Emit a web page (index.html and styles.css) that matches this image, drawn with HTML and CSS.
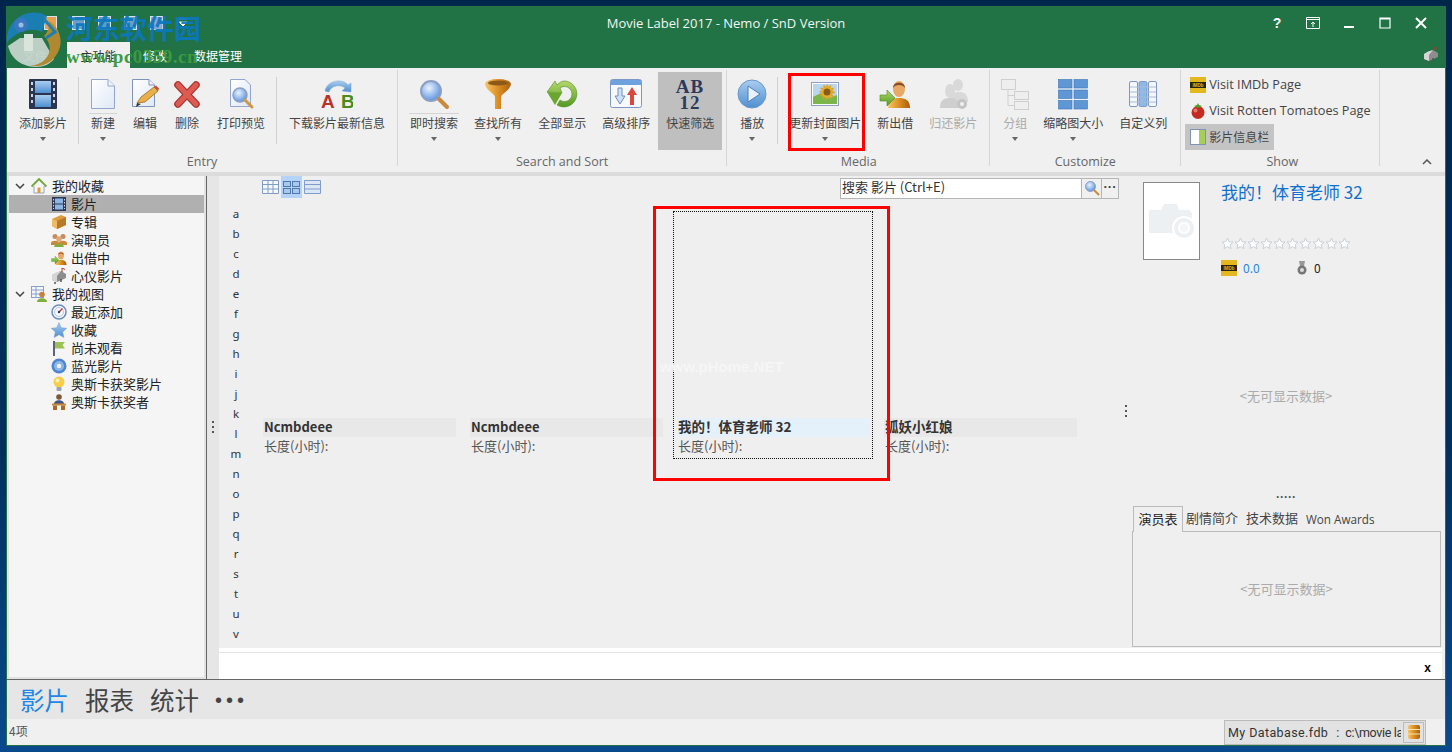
FILE: index.html
```html
<!DOCTYPE html>
<html lang="zh-CN">
<head>
  <meta charset="UTF-8" />
  <title>Movie Label 2017</title>
  <link rel="stylesheet" href="styles.css">
</head>
<body>
  <svg class="defs" width="0" height="0">
    <defs>
      <linearGradient id="gPaper" x1="0" y1="0" x2="1" y2="1"><stop offset="0" stop-color="#fff"/><stop offset="1" stop-color="#dfe8f6"/></linearGradient>
      <linearGradient id="gBlue" x1="0" y1="0" x2="0" y2="1"><stop offset="0" stop-color="#a9cdf0"/><stop offset="1" stop-color="#4f8fd0"/></linearGradient>
      <linearGradient id="gGold" x1="0" y1="0" x2="1" y2="0"><stop offset="0" stop-color="#f6c66a"/><stop offset=".55" stop-color="#d98a1e"/><stop offset="1" stop-color="#a85f10"/></linearGradient>
      <linearGradient id="gGreen" x1="0" y1="0" x2="0" y2="1"><stop offset="0" stop-color="#b5d96a"/><stop offset="1" stop-color="#4f9a23"/></linearGradient>
      <radialGradient id="gLens" cx=".4" cy=".35" r=".8"><stop offset="0" stop-color="#e8f3ff"/><stop offset="1" stop-color="#3f7fd8"/></radialGradient>

      <symbol id="i-film" viewBox="0 0 32 32"><rect x="2" y="1" width="28" height="30" rx="1" fill="#2b3550"/><rect x="8" y="3" width="16" height="12" fill="url(#gBlue)"/><rect x="8" y="17" width="16" height="12" fill="url(#gBlue)"/><g fill="#cdd6e6"><rect x="4" y="4" width="2" height="3"/><rect x="4" y="10" width="2" height="3"/><rect x="4" y="16" width="2" height="3"/><rect x="4" y="22" width="2" height="3"/><rect x="26" y="4" width="2" height="3"/><rect x="26" y="10" width="2" height="3"/><rect x="26" y="16" width="2" height="3"/><rect x="26" y="22" width="2" height="3"/></g></symbol>
      <symbol id="i-doc" viewBox="0 0 32 32"><path d="M4.500 1.500H21L27.500 8V30.500H4.500Z" fill="url(#gPaper)" stroke="#93a6cc"/><path d="M21 1.500V8H27.500" fill="#eef3fb" stroke="#93a6cc"/></symbol>
      <symbol id="i-edit" viewBox="0 0 32 32"><path d="M3.500 1.500H20L25.500 7V28.500H3.500Z" fill="url(#gPaper)" stroke="#7f93bd"/><path d="M20 1.500V7H25.500" fill="#eef3fb" stroke="#7f93bd"/><path d="M8 25L12 19 25 9 29 13 16 24Z" fill="#e9b04a" stroke="#9a6a20" stroke-width=".8"/><path d="M25 9L27 7.500 30 10.500 29 13Z" fill="#cf4c3a"/><path d="M7 29L8 25 12 26Z" fill="#333"/></symbol>
      <symbol id="i-del" viewBox="0 0 32 32"><path d="M7 7L25 26M25 7L7 26" stroke="#a8352f" stroke-width="7.500" stroke-linecap="round"/><path d="M7 7L25 26M25 7L7 26" stroke="#de5b52" stroke-width="5" stroke-linecap="round"/></symbol>
      <symbol id="i-preview" viewBox="0 0 32 32"><path d="M5.500 1.500H20L25.500 7V28.500H5.500Z" fill="url(#gPaper)" stroke="#93a6cc"/><circle cx="15" cy="17" r="7" fill="url(#gLens)" stroke="#8d9fc4" stroke-width="1.500"/><path d="M20 22L27 29" stroke="#d0964a" stroke-width="3" stroke-linecap="round"/></symbol>
      <symbol id="i-ab" viewBox="0 0 32 32"><path d="M4 13C6 2 22 0 27 7L30 5 30 14 21 13 24 10C20 6 10 7 8 14Z" fill="url(#gBlue)" stroke="#7ba5d2" stroke-width=".5"/><text x="0" y="30" class="ab-a">A</text><text x="20" y="30" class="ab-b">B</text></symbol>
      <symbol id="i-search" viewBox="0 0 32 32"><circle cx="13" cy="13" r="10" fill="url(#gLens)" stroke="#8d9fc4" stroke-width="2"/><path d="M21 21L29 29" stroke="#c98a3c" stroke-width="4" stroke-linecap="round"/></symbol>
      <symbol id="i-funnel" viewBox="0 0 32 32"><ellipse cx="16" cy="6" rx="13" ry="5" fill="url(#gGold)"/><ellipse cx="16" cy="5" rx="10" ry="2.500" fill="#8c5a18"/><path d="M3 7C6 14 12 15 13 19V31H19V19C20 15 26 14 29 7 24 11 8 11 3 7Z" fill="url(#gGold)"/></symbol>
      <symbol id="i-refresh" viewBox="0 0 32 32"><path d="M17 3A13 13 0 1 1 11 27L14 22A7.500 7.500 0 1 0 14 10L16 15 1 14 9 3 11 7A13 13 0 0 1 17 3Z" fill="url(#gGreen)" stroke="#5a8c2a" stroke-width=".6"/><path d="M1 14L16 15 9 27Z" fill="#6aa52f"/></symbol>
      <symbol id="i-sort" viewBox="0 0 32 32"><rect x=".500" y="1.500" width="31" height="28" rx="2" fill="#f7f9fd" stroke="#7f97c4"/><rect x="1" y="2" width="30" height="5" fill="#6ea2de"/><path d="M8 10H12V18H15L10 26 5 18H8Z" fill="#cfe0f5" stroke="#6e8fc0"/><path d="M20 27H24V17H27L22 9 17 17H20Z" fill="#d9483d"/></symbol>
      <symbol id="i-abnum" viewBox="0 0 32 32"><text x="16" y="15" class="num-t">AB</text><text x="16" y="31" class="num-t">12</text></symbol>
      <symbol id="i-play" viewBox="0 0 32 32"><circle cx="16" cy="16" r="14" fill="url(#gBlue)" stroke="#6d97c7"/><path d="M12 8L24 16 12 24Z" fill="#e8f2fc" stroke="#4f7fb8"/></symbol>
      <symbol id="i-photo" viewBox="0 0 32 32"><rect x="2.500" y="4.500" width="27" height="23" fill="#fff" stroke="#8fa0c4"/><rect x="4" y="6" width="24" height="20" fill="#b9d6ee"/><path d="M4 26V19L12 15 20 20 28 17V26Z" fill="#7cb64a"/><circle cx="18" cy="14" r="6" fill="#e8b030" stroke="#e2a020" stroke-width="3" stroke-dasharray="1.500 1.500"/><circle cx="18" cy="14" r="3.500" fill="#8a5a1a"/></symbol>
      <symbol id="i-lend" viewBox="0 0 32 32"><path d="M9 30C9 22 14 20 20 20S31 22 31 30Z" fill="url(#gGold)"/><ellipse cx="20" cy="11" rx="6" ry="8" fill="#e8a868"/><path d="M14 10C14 3 26 3 26 10 24 6 16 6 14 10Z" fill="#8a4a22"/><path d="M1 17H8V12L16 20 8 28V23H1Z" fill="url(#gGreen)" stroke="#4f8a22" stroke-width=".6"/></symbol>
      <symbol id="i-return" viewBox="0 0 32 32"><g fill="#d9d9d9"><ellipse cx="21" cy="7" rx="5" ry="6"/><path d="M13 24C13 16 17 14 22 14S31 16 31 24Z"/><ellipse cx="13" cy="13" rx="5" ry="7"/><path d="M3 30C3 22 7 20 13 20S22 22 22 30Z" fill="#cfcfcf"/></g><circle cx="25" cy="26" r="5" fill="#c4c4c4"/><circle cx="25" cy="26" r="2" fill="#f0f0f0"/></symbol>
      <symbol id="i-tree" viewBox="0 0 32 32"><g fill="#eee" stroke="#cfcfcf"><rect x="2.500" y="1.500" width="14" height="10"/><rect x="15.500" y="13.500" width="14" height="8"/><rect x="15.500" y="23.500" width="14" height="8"/></g><path d="M9 12V27.500H15M9 17.500H15" fill="none" stroke="#cfcfcf"/></symbol>
      <symbol id="i-grid" viewBox="0 0 32 32"><rect x="1" y="1" width="30" height="30" fill="#e8f0fa"/><g fill="#5f97d4" stroke="#3f74b4" stroke-width=".6"><rect x="1.500" y="1.500" width="13.500" height="8.500"/><rect x="17" y="1.500" width="13.500" height="8.500"/><rect x="1.500" y="12" width="13.500" height="8.500"/><rect x="17" y="12" width="13.500" height="8.500"/><rect x="1.500" y="22.500" width="13.500" height="8.500"/><rect x="17" y="22.500" width="13.500" height="8.500"/></g></symbol>
      <symbol id="i-cols" viewBox="0 0 32 32"><g stroke="#7f97c4"><rect x="2.500" y="3.500" width="8" height="25" rx="1.500" fill="#f4f7fc"/><rect x="12" y="3.500" width="8" height="25" rx="1.500" fill="#8eb8e6"/><rect x="21.500" y="3.500" width="8" height="25" rx="1.500" fill="#f4f7fc"/></g><path d="M3 9H29M3 14H29M3 19H29M3 24H29" stroke="#a9bbd9"/></symbol>
      <symbol id="i-imdb" viewBox="0 0 16 16"><rect width="16" height="16" fill="#e3b81f"/><rect x="0" y="5" width="16" height="6" fill="#2a2412"/><text x="8" y="10.300" class="imdb-t">IMDb</text></symbol>
      <symbol id="i-tomato" viewBox="0 0 16 16"><circle cx="8" cy="9.500" r="6.500" fill="#c22a22"/><circle cx="5.500" cy="7.500" r="2" fill="#e67a6a"/><path d="M4 3L8 5 12 3 9 2 8 0 7 2Z" fill="#4f9a23"/></symbol>
      <symbol id="i-panel" viewBox="0 0 16 16"><rect x=".500" y=".500" width="15" height="15" fill="#fff" stroke="#8292b4"/><rect x="9" y="1" width="6" height="14" fill="#a6cf5a"/></symbol>
      <symbol id="i-home" viewBox="0 0 16 16"><path d="M3 8V15H13V8" fill="#fbfaf2" stroke="#8fa3c8"/><rect x="6.500" y="9.500" width="3" height="5.500" fill="#e39a3a"/><path d="M.500 8.500L8 1 15.500 8.500" fill="none" stroke="#6ea63a" stroke-width="1.800"/></symbol>
      <symbol id="i-strip" viewBox="0 0 16 16"><rect x="1" y="1" width="14" height="14" fill="#2f3a55"/><rect x="4" y="2.500" width="8" height="5" fill="#8db6e2"/><rect x="4" y="8.500" width="8" height="5" fill="#8db6e2"/><path d="M2.500 3V13M13.500 3V13" stroke="#cdd6e6" stroke-dasharray="1.500 1.500"/></symbol>
      <symbol id="i-box" viewBox="0 0 16 16"><path d="M1 5L10 1 15 3V11L6 15 1 12Z" fill="#dc9c42"/><path d="M6 7L15 3V11L6 15Z" fill="#b97a26"/><path d="M1 5L6 7V15L1 12Z" fill="#eebb68"/></symbol>
      <symbol id="i-people" viewBox="0 0 16 16"><g fill="#c98a5a"><circle cx="4" cy="4.500" r="2.500"/><circle cx="12" cy="4.500" r="2.500"/></g><path d="M0 11C0 8 8 8 8 11V13H0ZM8 11C8 8 16 8 16 11V13H8Z" fill="#c98a3a"/><circle cx="8" cy="7" r="2.800" fill="#e0a878"/><path d="M3 15C3 10.500 13 10.500 13 15Z" fill="#7fae3a"/></symbol>
      <symbol id="i-mail" viewBox="0 0 16 16"><path d="M1 7L10 3 15 6V10L6 14 1 12Z" fill="#8d8d8d"/><path d="M1 7L5 4.500 10 3 6 8V14L1 12Z" fill="#d5d5d5"/><path d="M4 14V16M10 11V14" stroke="#555" stroke-width="1.500"/><path d="M11 4V0L14 1.500" fill="none" stroke="#b3362c"/></symbol>
      <symbol id="i-view" viewBox="0 0 16 16"><rect x=".500" y=".500" width="12" height="11" fill="#f3f6fb" stroke="#8ba0c8"/><path d="M.500 4H12.500M.500 8H12.500M5 1V11" stroke="#8ba0c8"/><circle cx="11" cy="8.500" r="2.800" fill="#c9803f"/><path d="M6 16C6 11 16 11 16 16Z" fill="#7fae3a"/></symbol>
      <symbol id="i-gauge" viewBox="0 0 16 16"><circle cx="8" cy="8" r="7" fill="#f4f7fc" stroke="#6c8cc4" stroke-width="1.500"/><circle cx="8" cy="8" r="4.500" fill="none" stroke="#b9c8e2"/><path d="M8 8L11.500 4.500" stroke="#c2362c" stroke-width="1.300"/><circle cx="8" cy="8" r="1.200" fill="#2d3a5c"/></symbol>
      <symbol id="i-star" viewBox="0 0 16 16"><path d="M8 .500L10.300 5.700 15.800 6.300 11.700 10 12.900 15.500 8 12.700 3.100 15.500 4.300 10 .200 6.300 5.700 5.700Z" fill="url(#gBlue)" stroke="#7b9fcb" stroke-width=".5"/></symbol>
      <symbol id="i-flag" viewBox="0 0 16 16"><path d="M3 1V16" stroke="#33405c" stroke-width="1.600"/><path d="M4 2H14L11.500 5 14 8.500H4Z" fill="#9cc254"/></symbol>
      <symbol id="i-disc" viewBox="0 0 16 16"><circle cx="8" cy="8" r="7.500" fill="#4f86cf"/><circle cx="8" cy="8" r="5" fill="#8db6e8"/><circle cx="8" cy="8" r="2.200" fill="#f0f5fb"/></symbol>
      <symbol id="i-bulb" viewBox="0 0 16 16"><circle cx="8" cy="6" r="5.500" fill="#f6ce4a"/><circle cx="6.500" cy="4.500" r="2" fill="#fdf0b0"/><rect x="5.500" y="11" width="5" height="4" rx="1" fill="#9aa4b8"/></symbol>
      <symbol id="i-desk" viewBox="0 0 16 16"><circle cx="8" cy="3" r="2.800" fill="#7a5a3a"/><path d="M3 10C3 5 13 5 13 10Z" fill="#3f5580"/><rect x="1" y="9.500" width="14" height="2" fill="#c98a3a"/><rect x="2" y="11.500" width="4" height="4.500" fill="#a86a22"/><rect x="10" y="11.500" width="4" height="4.500" fill="#a86a22"/></symbol>
      <symbol id="i-db" viewBox="0 0 16 16"><rect x="2" y="1" width="12" height="14" rx="2" fill="url(#gGold)"/><path d="M2 5.500H14M2 10H14" stroke="#fde2a8" stroke-width="1.200"/></symbol>
    </defs>
  </svg>

  <div class="window">
    <div class="titlebar">
      <div class="title-row">
        <div class="quick">
          <span class="qa qa-a"></span><span class="qa qa-b"></span><span class="qa qa-c"></span><span class="qa qa-d"></span><span class="qa qa-e"></span>
          <svg class="qa-more" width="10" height="10" viewBox="0 0 10 10"><path d="M1 1H9M1 4H9L5 8Z" fill="#fff" stroke="#fff"/></svg>
        </div>
        <div class="app-title">Movie Label 2017 - Nemo / SnD Version</div>
        <div class="win-btns">
          <span class="win-btn help">?</span>
          <span class="win-btn"><svg width="14" height="12" viewBox="0 0 14 12"><path d="M.500.500H13.500V11.500H.500ZM.500 2.500H13.500M7 10V5M5 7L7 5 9 7" fill="none" stroke="#fff"/></svg></span>
          <span class="win-btn"><svg width="12" height="12" viewBox="0 0 12 12"><path d="M1 10H11" stroke="#fff" stroke-width="2"/></svg></span>
          <span class="win-btn"><svg width="12" height="12" viewBox="0 0 12 12"><path d="M1 1H11V11H1ZM1 2H11" fill="none" stroke="#fff" stroke-width="1.200"/></svg></span>
          <span class="win-btn"><svg width="12" height="12" viewBox="0 0 12 12"><path d="M1 1L11 11M11 1L1 11" stroke="#fff" stroke-width="2"/></svg></span>
        </div>
      </div>
      <div class="tab-row">
        <span class="rtab rtab-file">文件</span>
        <span class="rtab rtab-main active">主功能</span>
        <span class="rtab rtab-edit">修改</span>
        <span class="rtab rtab-data">数据管理</span>
        <svg class="tab-mail" width="16" height="16"><use href="#i-mail"/></svg>
      </div>
    </div>

    <div class="ribbon">
      <div class="rgroup g-entry">
        <div class="rbtns">
          <div class="rbtn"><svg class="ico"><use href="#i-film"/></svg><span>添加影片</span><i class="caret"></i></div>
          <b class="rsep"></b>
          <div class="rbtn split"><svg class="ico"><use href="#i-doc"/></svg><span>新建</span><i class="caret"></i></div>
          <div class="rbtn"><svg class="ico"><use href="#i-edit"/></svg><span>编辑</span></div>
          <div class="rbtn"><svg class="ico"><use href="#i-del"/></svg><span>删除</span></div>
          <div class="rbtn"><svg class="ico"><use href="#i-preview"/></svg><span>打印预览</span></div>
          <b class="rsep"></b>
          <div class="rbtn"><svg class="ico"><use href="#i-ab"/></svg><span>下载影片最新信息</span></div>
        </div>
        <div class="rlabel">Entry</div>
      </div>
      <b class="gsep"></b>
      <div class="rgroup g-search">
        <div class="rbtns">
          <div class="rbtn split"><svg class="ico"><use href="#i-search"/></svg><span>即时搜索</span><i class="caret"></i></div>
          <div class="rbtn"><svg class="ico"><use href="#i-funnel"/></svg><span>查找所有</span><i class="caret"></i></div>
          <div class="rbtn"><svg class="ico"><use href="#i-refresh"/></svg><span>全部显示</span></div>
          <div class="rbtn"><svg class="ico"><use href="#i-sort"/></svg><span>高级排序</span></div>
          <div class="rbtn on"><svg class="ico"><use href="#i-abnum"/></svg><span>快速筛选</span></div>
        </div>
        <div class="rlabel">Search and Sort</div>
      </div>
      <b class="gsep"></b>
      <div class="rgroup g-media">
        <div class="rbtns">
          <div class="rbtn"><svg class="ico"><use href="#i-play"/></svg><span>播放</span><i class="caret"></i></div>
          <b class="rsep"></b>
          <div class="rbtn"><svg class="ico"><use href="#i-photo"/></svg><span>更新封面图片</span><i class="caret"></i></div>
          <div class="rbtn"><svg class="ico"><use href="#i-lend"/></svg><span>新出借</span></div>
          <div class="rbtn off"><svg class="ico"><use href="#i-return"/></svg><span>归还影片</span></div>
        </div>
        <div class="rlabel">Media</div>
      </div>
      <b class="gsep"></b>
      <div class="rgroup g-custom">
        <div class="rbtns">
          <div class="rbtn off"><svg class="ico"><use href="#i-tree"/></svg><span>分组</span><i class="caret"></i></div>
          <div class="rbtn"><svg class="ico"><use href="#i-grid"/></svg><span>缩略图大小</span><i class="caret"></i></div>
          <div class="rbtn"><svg class="ico"><use href="#i-cols"/></svg><span>自定义列</span></div>
        </div>
        <div class="rlabel">Customize</div>
      </div>
      <b class="gsep"></b>
      <div class="rgroup g-show">
        <div class="rrows">
          <div class="rrow"><svg class="ico16"><use href="#i-imdb"/></svg>Visit IMDb Page</div>
          <div class="rrow"><svg class="ico16"><use href="#i-tomato"/></svg>Visit Rotten Tomatoes Page</div>
          <div class="rrow on"><svg class="ico16"><use href="#i-panel"/></svg>影片信息栏</div>
        </div>
        <div class="rlabel">Show</div>
      </div>
      <b class="gsep"></b>
      <div class="rend">
        <svg width="10" height="6" viewBox="0 0 10 6"><path d="M1 5L5 1 9 5" fill="none" stroke="#555" stroke-width="1.500"/></svg>
      </div>
    </div>

    <div class="main">
      <div class="side">
        <div class="tree-row top"><svg class="chev" width="10" height="6" viewBox="0 0 10 6"><path d="M1 1L5 5 9 1" fill="none" stroke="#444" stroke-width="1.500"/></svg><svg class="ico16"><use href="#i-home"/></svg>我的收藏</div>
        <div class="tree-row sel"><svg class="ico16"><use href="#i-strip"/></svg>影片</div>
        <div class="tree-row"><svg class="ico16"><use href="#i-box"/></svg>专辑</div>
        <div class="tree-row"><svg class="ico16"><use href="#i-people"/></svg>演职员</div>
        <div class="tree-row"><svg class="ico16"><use href="#i-lend"/></svg>出借中</div>
        <div class="tree-row"><svg class="ico16"><use href="#i-mail"/></svg>心仪影片</div>
        <div class="tree-row top"><svg class="chev" width="10" height="6" viewBox="0 0 10 6"><path d="M1 1L5 5 9 1" fill="none" stroke="#444" stroke-width="1.500"/></svg><svg class="ico16"><use href="#i-view"/></svg>我的视图</div>
        <div class="tree-row"><svg class="ico16"><use href="#i-gauge"/></svg>最近添加</div>
        <div class="tree-row"><svg class="ico16"><use href="#i-star"/></svg>收藏</div>
        <div class="tree-row"><svg class="ico16"><use href="#i-flag"/></svg>尚未观看</div>
        <div class="tree-row"><svg class="ico16"><use href="#i-disc"/></svg>蓝光影片</div>
        <div class="tree-row"><svg class="ico16"><use href="#i-bulb"/></svg>奥斯卡获奖影片</div>
        <div class="tree-row"><svg class="ico16"><use href="#i-desk"/></svg>奥斯卡获奖者</div>
      </div>
      <div class="split-v"><span class="vdots"></span></div>
      <div class="work">
        <div class="work-top">
          <div class="center">
            <div class="view-bar">
              <span class="vbtn"><svg width="17" height="14" viewBox="0 0 17 14"><path d="M.500.500H16.500V13.500H.500ZM.500 4.500H16.500M.500 9H16.500M6 .500V13.500M11 .500V13.500" fill="#f6f9fd" stroke="#7f9ccb"/></svg></span>
              <span class="vbtn on"><svg width="17" height="14" viewBox="0 0 17 14"><g fill="#a8c8ec" stroke="#4f78ad"><rect x=".500" y="1.500" width="7" height="5"/><rect x="9.500" y="1.500" width="7" height="5"/><rect x=".500" y="8.500" width="7" height="5"/><rect x="9.500" y="8.500" width="7" height="5"/></g></svg></span>
              <span class="vbtn"><svg width="17" height="14" viewBox="0 0 17 14"><path d="M.500.500H16.500V13.500H.500ZM.500 4.500H16.500M.500 9H16.500" fill="#dbe6f4" stroke="#7f9ccb"/></svg></span>
              <div class="searchbox">
                <span class="search-text">搜索 影片 (Ctrl+E)</span>
                <span class="search-go"><svg width="16" height="16"><use href="#i-search"/></svg></span>
                <span class="search-more">···</span>
              </div>
            </div>
            <div class="browse">
              <div class="alpha">
                <span>a</span><span>b</span><span>c</span><span>d</span><span>e</span><span>f</span><span>g</span><span>h</span><span>i</span><span>j</span><span>k</span>
                <span>l</span><span>m</span><span>n</span><span>o</span><span>p</span><span>q</span><span>r</span><span>s</span><span>t</span><span>u</span><span>v</span>
              </div>
              <div class="cards">
                <div class="card"><div class="card-title latin">Ncmbdeee</div><div class="card-sub">长度(小时):</div></div>
                <div class="card"><div class="card-title latin">Ncmbdeee</div><div class="card-sub">长度(小时):</div></div>
                <div class="card cur"><div class="card-title">我的<span class="fw">！</span>体育老师 32</div><div class="card-sub">长度(小时):</div></div>
                <div class="card"><div class="card-title">狐妖小红娘</div><div class="card-sub">长度(小时):</div></div>
              </div>
            </div>
          </div>
          <div class="split-r"><span class="vdots"></span></div>
          <div class="detail">
            <div class="detail-head">
              <div class="poster">
                <svg width="50" height="40" viewBox="0 0 50 40"><path d="M0 10 2 9H12L15 3H28L30 9H38C42 9 43 11 43 14V32H0Z" fill="#edf0f2"/><circle cx="35" cy="27" r="12" fill="#fff"/><circle cx="35" cy="27" r="10" fill="#edf0f2"/><circle cx="35" cy="27" r="6" fill="#fff"/><circle cx="35" cy="27" r="4" fill="#f4f6f7"/></svg>
              </div>
              <div class="detail-info">
                <div class="detail-title">我的<span class="fw">！</span>体育老师 32</div>
                <svg class="stars" width="130" height="13" viewBox="0 0 130 13">
                  <defs><pattern id="pStar" width="13" height="13" patternUnits="userSpaceOnUse"><path d="M6.500 1L8.100 4.700 12 5.100 9.100 7.700 10 11.600 6.500 9.600 3 11.600 3.900 7.700 1 5.100 4.900 4.700Z" fill="#fff" stroke="#c3cbd6" stroke-width=".9"/></pattern></defs>
                  <rect width="130" height="13" fill="url(#pStar)"/>
                </svg>
                <div class="detail-meta">
                  <svg class="ico16"><use href="#i-imdb"/></svg><span class="imdb-val">0.0</span>
                  <span class="medal"><svg width="12" height="14" viewBox="0 0 12 14"><path d="M3 0H9L8 5H4Z" fill="#999"/><circle cx="6" cy="9" r="4.500" fill="#777"/><circle cx="6" cy="9" r="2" fill="#ddd"/></svg></span><span class="medal-val">0</span>
                </div>
              </div>
            </div>
            <div class="no-data upper">&lt;无可显示数据&gt;</div>
            <div class="hdots">·····</div>
            <div class="dtabs">
              <span class="dtab on">演员表</span>
              <span class="dtab">剧情简介</span>
              <span class="dtab">技术数据</span>
              <span class="dtab latin">Won Awards</span>
            </div>
            <div class="dbox"><div class="no-data">&lt;无可显示数据&gt;</div></div>
          </div>
        </div>
        <div class="filter-bar"><span class="filter-x">x</span></div>
      </div>
    </div>

    <div class="navbar">
      <span class="nav-item cur">影片</span>
      <span class="nav-item">报表</span>
      <span class="nav-item">统计</span>
      <span class="nav-more">•••</span>
    </div>
    <div class="statusbar">
      <span class="count">4项</span>
      <div class="dbinfo">
        <span class="dbname"><span class="db-file">My Database.fdb</span><span class="db-colon">:</span><span class="db-path">c:\movie labe</span></span>
        <span class="dbicon"><svg width="16" height="16"><use href="#i-db"/></svg></span>
      </div>
    </div>

    <!-- 截图上的标注和水印 -->
    <div class="mark mark-btn"></div>
    <div class="mark mark-card"></div>
    <div class="wm-logo">
      <svg width="58" height="56" viewBox="0 0 58 56">
        <path d="M2 34C6 50 20 55 30 55 38 55 44 52 48 47L36 26 14 26Z" fill="#c4d4cc"/>
        <path d="M1 31A27 27 0 0 1 41 4L36 20C24 14 8 21 1 31Z" fill="#1a7fb8"/>
        <path d="M38 24C42 20 44 14 43 9 56 17 60 36 45 49 38 54 30 55 24 54 42 52 50 36 38 24Z" fill="#b78a2e"/>
        <rect x="18" y="22" width="9" height="17" fill="#e3ece4"/>
        <circle cx="15" cy="13" r="7" fill="#3c78c8"/><circle cx="15" cy="13" r="2.500" fill="#9cc4e8"/>
        <path d="M38 7L49 20 40 26" fill="none" stroke="#1a7fb8" stroke-width="3"/>
      </svg>
    </div>
    <div class="wm-name">河东软件园</div>
    <div class="wm-url">www.pc0359.cn</div>
    <div class="wm-home">www.pHome.NET</div>
  </div>
</body>
</html>
```
FILE: styles.css
```css
* { box-sizing: border-box; }
html, body { height: 100%; }
body {
  margin: 0;
  padding: 6px;
  overflow: hidden;
  background: linear-gradient(180deg, #01264c 0%, #02305e 60%, #0a4a8c 100%);
  font-family: "Noto Sans CJK SC", "Noto Sans", sans-serif;
  font-size: 12px;
  color: #333;
}
.defs { position: absolute; }
.ab-a, .ab-b { font: bold 19px "Liberation Sans", sans-serif; }
.ab-a { fill: #b9322a; }
.ab-b { fill: #4a8a1e; }
.num-t { font: bold 19px "Liberation Serif", serif; fill: #2d3a5c; text-anchor: middle; letter-spacing: 1px; }
.imdb-t { font: bold 4.500px "Liberation Sans", sans-serif; fill: #e3b81f; text-anchor: middle; }
.fw { font-family: "Noto Sans CJK TC", sans-serif; }

.window {
  position: relative;
  width: 1440px;
  height: 740px;
  border: 1px solid #217346;
  background: #f0f0f0;
  display: flex;
  flex-direction: column;
  overflow: hidden;
}

/* title bar */
.titlebar { background: #217346; height: 61px; color: #fff; flex: none; }
.title-row { height: 32px; margin-bottom: 3px; display: grid; grid-template-columns: 1fr auto 1fr; align-items: center; }
.quick { display: flex; align-items: center; padding-left: 37px; gap: 13px; }
.qa { width: 13px; height: 14px; background: #6f9fc8; border: 1px solid #d8e2ee; }
.qa-a { background: #e5a24a; margin-right: 2px; }
.qa-c { background: #5aa0c8; }
.qa-e { background: #8fa6d8; }
.qa-more { margin-left: 2px; }
.app-title { font: 13px "Open Sans", sans-serif; color: #f2f6f3; white-space: nowrap; }
.win-btns { display: flex; justify-content: flex-end; padding-right: 6px; }
.win-btn { width: 36px; height: 20px; display: flex; align-items: center; justify-content: center; }
.help { font: bold 14px "Liberation Sans", sans-serif; }
.tab-row { height: 26px; display: flex; align-items: stretch; position: relative; }
.rtab { display: flex; align-items: center; justify-content: center; font-size: 12px; }
.rtab-file { width: 56px; margin-right: 4px; }
.rtab-main { width: 63px; }
.rtab-edit { width: 50px; }
.rtab-data { width: 76px; }
.rtab.active { background: #f0f0f0; color: #333; }
.tab-mail { margin: 5px 6px 0 auto; }

/* ribbon */
.ribbon {
  height: 108px;
  flex: none;
  display: flex;
  background: #f0f0f0;
  border-bottom: 4px solid #dcdcdc;
}
.rgroup { display: flex; flex-direction: column; padding-top: 4px; }
.rbtns { display: flex; height: 78px; }
.rbtn {
  display: flex;
  flex-direction: column;
  align-items: center;
  padding: 6px 8px 0;
  color: #444;
  position: relative;
}
.rbtn span { margin-top: 4px; line-height: 18px; white-space: nowrap; }
.ico { width: 32px; height: 32px; flex: none; margin: 0 -4px; }
.ico16 { width: 16px; height: 16px; flex: none; }
.caret { width: 0; height: 0; margin-top: 5px; border: 3.500px solid transparent; border-top: 4px solid #666; border-bottom: 0; }
.rbtn.on { background: #bfbfbf; }
.rbtn.off { color: #aaa; }
.rbtn.split::after {
  content: "";
  position: absolute;
  left: 7px;
  right: 7px;
  top: 41px;
  height: 1px;
  background: #d4d4d4;
}
.rsep { width: 1px; height: 67px; margin: 5px 3px 0 2px; background: #d0d0d0; }
.gsep { width: 1px; height: 96px; margin-top: 2px; background: #d6d6d6; flex: none; }
.rlabel { height: 22px; text-align: center; color: #666; font: 12.500px/23px "Open Sans", sans-serif; }
.g-entry { padding-left: 3px; padding-right: 3px; }
.g-entry .rbtn { padding-left: 9px; padding-right: 9px; }
.g-search { padding-left: 4px; padding-right: 4px; }
.g-media { padding-left: 5px; padding-right: 4px; }
.g-media .rsep { margin-left: 5px; }
.g-custom { padding-left: 5px; padding-right: 5px; }
.g-show { width: 198px; padding-left: 4px; }
.rrows { height: 78px; display: flex; flex-direction: column; align-items: flex-start; }
.rrow {
  height: 26px;
  display: flex;
  align-items: center;
  gap: 3px;
  padding: 0 5px 2px;
  font: 12.700px "Open Sans", "Noto Sans CJK SC", sans-serif;
  color: #444;
  white-space: nowrap;
}
.rrow .ico16 { margin-top: 2px; }
.rrow.on { background: #c4c4c4; padding-bottom: 0; font-size: 12px; }
.rrow.on .ico16 { margin-top: 0; }
.rend { flex: 1; display: flex; justify-content: flex-end; align-items: flex-end; padding: 0 13px 7px 0; }

/* main area */
.main { height: 503px; flex: none; display: flex; border-bottom: 0; }
.side {
  width: 200px;
  flex: none;
  padding: 1px 2px 2px 0;
  background: #f5f5f5;
  border-left: 2px solid #e2e2e2;
  border-right: 1px solid #666;
  box-shadow: inset -2px 0 0 #e2e2e2, inset 0 -2px 0 #e2e2e2;
  font-size: 13px;
}
.tree-row {
  height: 18px;
  display: flex;
  align-items: center;
  gap: 4px;
  padding: 0 0 2px 42px;
  color: #222;
  white-space: nowrap;
}
.tree-row .ico16 { margin-top: 2px; }
.tree-row.top { padding-left: 6px; }
.tree-row.top .chev { margin-right: 2px; margin-top: 2px; }
.tree-row.top .ico16 { margin-right: 1px; }
.tree-row.sel { background: #b0b0b0; }
.split-v { width: 12px; flex: none; background: #e6e6e6; display: flex; align-items: center; justify-content: center; }
.vdots { display: block; width: 2px; height: 14px; background: repeating-linear-gradient(180deg, #555 0, #555 2px, transparent 2px, transparent 5px); }
.work { flex: 1; display: flex; flex-direction: column; min-width: 0; padding-right: 3px; }
.work-top { height: 472px; display: flex; background: #efefef; flex: none; }
.center { width: 903px; flex: none; display: flex; flex-direction: column; }
.view-bar { height: 22px; display: flex; align-items: center; padding-left: 41px; }
.vbtn { width: 21px; height: 22px; display: flex; align-items: center; justify-content: center; }
.vbtn.on { background: #b3d4f8; }
.searchbox {
  margin: 2px 3px 0 auto;
  width: 279px;
  height: 21px;
  display: flex;
  border: 1px solid #b5b5b5;
  background: #fff;
}
.search-text { flex: 1; padding-left: 1px; line-height: 16px; font-size: 13px; color: #333; }
.search-go { width: 20px; background: #f0f0f0; border-left: 1px solid #b5b5b5; display: flex; align-items: center; justify-content: center; }
.search-more { width: 17px; background: #f0f0f0; border-left: 1px solid #b5b5b5; text-align: center; font: bold 13px/15px "Liberation Sans", sans-serif; color: #444; }
.browse { flex: 1; display: flex; }
.alpha { width: 34px; padding-top: 6px; display: flex; flex-direction: column; align-items: center; }
.alpha span { height: 20px; font: 11.500px/20px "Noto Sans", sans-serif; color: #333; }
.cards { display: flex; gap: 7px; padding: 13px 0 0 6px; align-items: flex-start; }
.card { width: 200px; height: 248px; padding-top: 207px; }
.card.cur { outline: 1px dotted #111; outline-offset: -1px; }
.card-title {
  margin-left: 4px;
  width: 193px;
  height: 19px;
  padding-left: 1px;
  background: #e8e8e8;
  font-size: 13.500px;
  font-weight: 700;
  line-height: 17px;
  color: #333;
  white-space: nowrap;
}
.card-title.latin { font-size: 13px; }
.cur .card-title { background: #e4f0fa; }
.card-sub { margin-left: 5px; height: 19px; font-size: 13px; line-height: 17px; color: #555; }
.split-r { width: 8px; flex: none; display: flex; justify-content: center; padding-top: 229px; }
.detail { flex: 1; display: flex; flex-direction: column; min-width: 0; }
.detail-head { display: flex; padding: 6px 0 0 13px; height: 101px; flex: none; }
.poster {
  width: 57px;
  height: 78px;
  border: 1px solid #888;
  background: #fff;
  display: flex;
  align-items: center;
  justify-content: center;
  padding-left: 4px;
}
.detail-info { margin-left: 21px; display: flex; flex-direction: column; }
.detail-title { font-size: 17px; line-height: 20px; color: #1070d0; white-space: nowrap; }
.stars { display: block; margin-top: 35px; }
.detail-meta { display: flex; align-items: center; margin-top: 9px; }
.imdb-val { margin-left: 6px; width: 53px; color: #1e88e5; }
.medal { width: 12px; height: 14px; display: flex; }
.medal-val { margin-left: 6px; color: #222; }
.no-data { color: #aaa; font-size: 13px; text-align: center; line-height: 18px; }
.upper { flex: 1; padding-top: 24px; display: flex; align-items: center; justify-content: center; }
.hdots { height: 15px; flex: none; text-align: center; font: bold 12px/15px "Liberation Sans", sans-serif; color: #555; }
.dtabs { height: 26px; flex: none; display: flex; align-items: flex-end; gap: 8px; padding-left: 3px; position: relative; }
.dtab { height: 25px; line-height: 23px; font-size: 13px; color: #444; white-space: nowrap; }
.dtab.latin { font: 11.700px/26px "Open Sans", sans-serif; }
.dtab.on {
  width: 50px;
  height: 26px;
  margin-right: -5px;
  text-align: center;
  border: 1px solid #bbb;
  border-bottom: 0;
  background: #efefef;
  color: #222;
  position: relative;
  top: 1px;
  z-index: 1;
}
.dbox {
  height: 116px;
  flex: none;
  margin: 0 1px 1px 2px;
  border: 1px solid #bbb;
  display: flex;
  align-items: center;
  justify-content: center;
}
.filter-bar {
  flex: 1;
  background: #fff;
  position: relative;
  display: flex;
  align-items: center;
  justify-content: flex-end;
  padding: 8px 11px 0 0;
  box-shadow: inset 0 -26px 0 #fff, inset 0 -27px 0 #e4e4e4;
}
.filter-x { font: bold 12px "Liberation Sans", sans-serif; color: #000; }

/* bottom */
.navbar {
  height: 40px;
  flex: none;
  display: flex;
  align-items: center;
  gap: 16px;
  padding-left: 13px;
  border-top: 1px solid #666;
  background: #e6e6e6;
}
.nav-item { font-size: 24.500px; line-height: 38px; color: #444; }
.nav-item.cur { color: #1e88e5; }
.nav-more { font: 20px/38px "Liberation Sans", sans-serif; letter-spacing: 4px; color: #444; }
.statusbar { flex: 1; display: flex; align-items: center; justify-content: space-between; background: #f0f0f0; padding: 0 19px 0 2px; }
.count { color: #555; line-height: 22px; padding-bottom: 2px; }
.dbinfo {
  width: 202px;
  height: 25px;
  display: flex;
  align-items: center;
  background: #e2e2e2;
  border: 1px solid #bbb;
  padding-left: 3px;
}
.dbname { display: flex; width: 173px; overflow: hidden; white-space: nowrap; font: 12.500px Roboto, sans-serif; color: #333; }
.db-file { letter-spacing: .4px; }
.db-colon { margin: 0 6px 0 8px; }
.db-path { letter-spacing: -.35px; }
.dbicon { width: 21px; height: 21px; margin-left: 2px; border: 1px solid #bbb; display: flex; align-items: center; justify-content: center; }

/* overlays */
.mark { position: absolute; border: 3px solid #f00; pointer-events: none; }
.mark-btn { left: 781px; top: 66px; width: 77px; height: 78px; }
.mark-card { left: 646px; top: 199px; width: 237px; height: 275px; }
.wm-logo { position: absolute; left: -1px; top: 5px; opacity: .95; }
.wm-name { position: absolute; left: 59px; top: 4px; font: 700 27px/34px "Noto Sans CJK SC", sans-serif; color: #0b78bc; white-space: nowrap; opacity: .92; }
.wm-url { position: absolute; left: 59px; top: 38px; font: 700 19px/24px "Liberation Serif", serif; letter-spacing: .5px; color: #3e9a3e; white-space: nowrap; }
.wm-home { position: absolute; left: 653px; top: 350px; font: 700 15px/20px "Liberation Sans", sans-serif; color: #f6f6f6; white-space: nowrap; }
```
